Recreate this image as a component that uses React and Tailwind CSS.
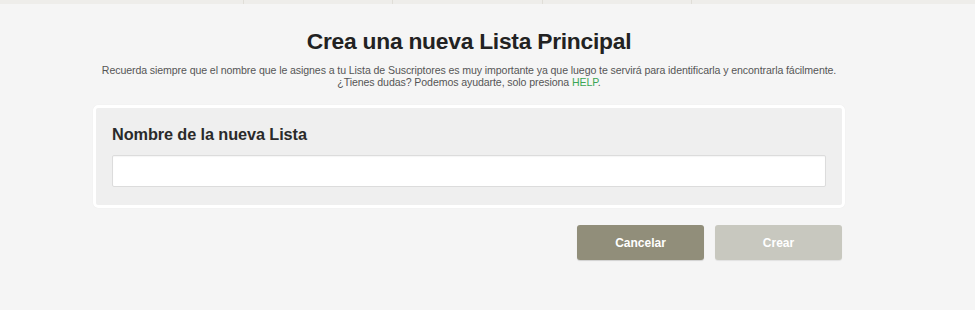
export default function App() {
  const font = { fontFamily: '"Liberation Sans", Arial, sans-serif' };
  return (
    <div className="w-[975px] h-[310px] bg-[#f5f5f5] relative overflow-hidden" style={font}>
      <div className="h-[4px] bg-[#eeedea] flex">
        <div className="w-[244px] border-r border-[#e0ded8]" />
        <div className="w-[149px] border-r border-[#e0ded8]" />
        <div className="w-[150px] border-r border-[#e0ded8]" />
        <div className="w-[149px] border-r border-[#e0ded8]" />
      </div>
      <div className="ml-[93px] w-[752px] flex flex-col">
        <h1 className="mt-[23px] text-center text-[22.8px] leading-[28px] font-bold text-[#222] tracking-[-0.25px]">
          Crea una nueva Lista Principal
        </h1>
        <p className="mt-[9px] -mx-[10px] text-center text-[10.6px] leading-[12px] text-[#555] tracking-[-0.1px]">
          Recuerda siempre que el nombre que le asignes a tu Lista de Suscriptores es muy importante ya que luego te servirá para identificarla y encontrarla fácilmente.
          <br />
          ¿Tienes dudas? Podemos ayudarte, solo presiona <span className="text-[#3aa653]">HELP</span>.
        </p>
        <div className="mt-[17px] h-[103px] border-[3px] border-white rounded-[5px] bg-[#efefef] px-[16px] pt-[16px] shadow-[0_0_1px_rgba(0,0,0,0.08)]">
          <div className="text-[16.3px] leading-[20px] font-bold text-[#2a2a2a] tracking-[-0.1px]">Nombre de la nueva Lista</div>
          <div className="mt-[11px] h-[32px] bg-white border border-[#dcdcdc] rounded-[2px] shadow-[inset_0_1px_1px_rgba(0,0,0,0.04)]" />
        </div>
        <div className="mt-[17px] flex justify-end gap-[11px] pr-[3px]">
          <button className="w-[127px] h-[35px] rounded-[3px] bg-[#918e7a] text-white text-[12px] font-bold shadow-[0_1px_1px_rgba(0,0,0,0.15)]">
            Cancelar
          </button>
          <button className="w-[127px] h-[35px] rounded-[3px] bg-[#c8c8bf] text-white text-[12px] font-bold shadow-[0_1px_1px_rgba(0,0,0,0.08)]">
            Crear
          </button>
        </div>
      </div>
    </div>
  );
}
